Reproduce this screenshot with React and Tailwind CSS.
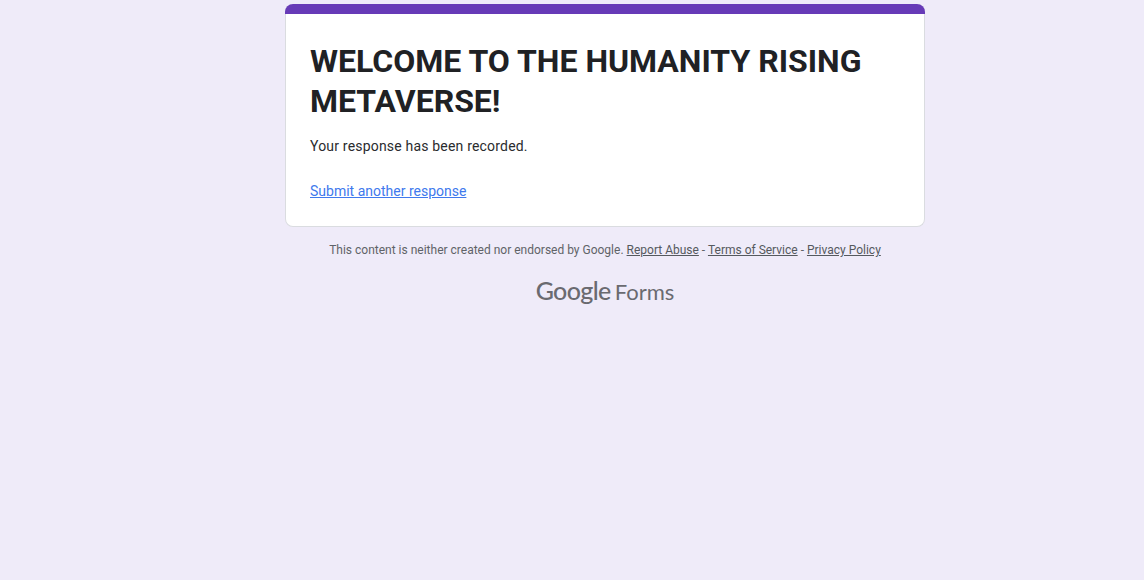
export default function App() {
  return (
    <div className="min-h-screen bg-[#efebf9] pt-1 pl-[285px] font-['Roboto',sans-serif]">
      <div className="w-[640px]">
        {/* Card */}
        <div className="h-[223px] rounded-lg bg-white border border-[#dadce0] border-t-0">
          <div className="h-[10px] bg-[#673ab7] rounded-t-lg -mx-px" />
          <div className="px-6 pt-[27px]">
            <h1 className="text-[32px] leading-10 font-bold text-[#202124]">
              WELCOME TO THE HUMANITY RISING METAVERSE!
            </h1>
            <p className="mt-[15px] text-sm leading-5 tracking-[0.19px] text-[#2a2b2e]">
              Your response has been recorded.
            </p>
            <a href="#" className="block mt-[25px] text-sm leading-5 text-[#4079ed] underline">
              Submit another response
            </a>
          </div>
        </div>

        {/* Footer */}
        <div className="mt-[14px] text-center text-xs leading-[18px] text-[#5f6368]">
          This content is neither created nor endorsed by Google.{' '}
          <a href="#" className="underline text-[#55595e]">Report Abuse</a> -{' '}
          <a href="#" className="underline text-[#55595e]">Terms of Service</a> -{' '}
          <a href="#" className="underline text-[#55595e]">Privacy Policy</a>
        </div>

        {/* Logo text */}
        <div className="mt-[17px] flex justify-center items-baseline gap-1 text-[#6a6a70] font-['Lato',sans-serif] leading-7">
          <span className="text-[25px] tracking-[-0.6px] font-medium">Google</span>
          <span className="text-[22px]">Forms</span>
        </div>
      </div>
    </div>
  );
}
